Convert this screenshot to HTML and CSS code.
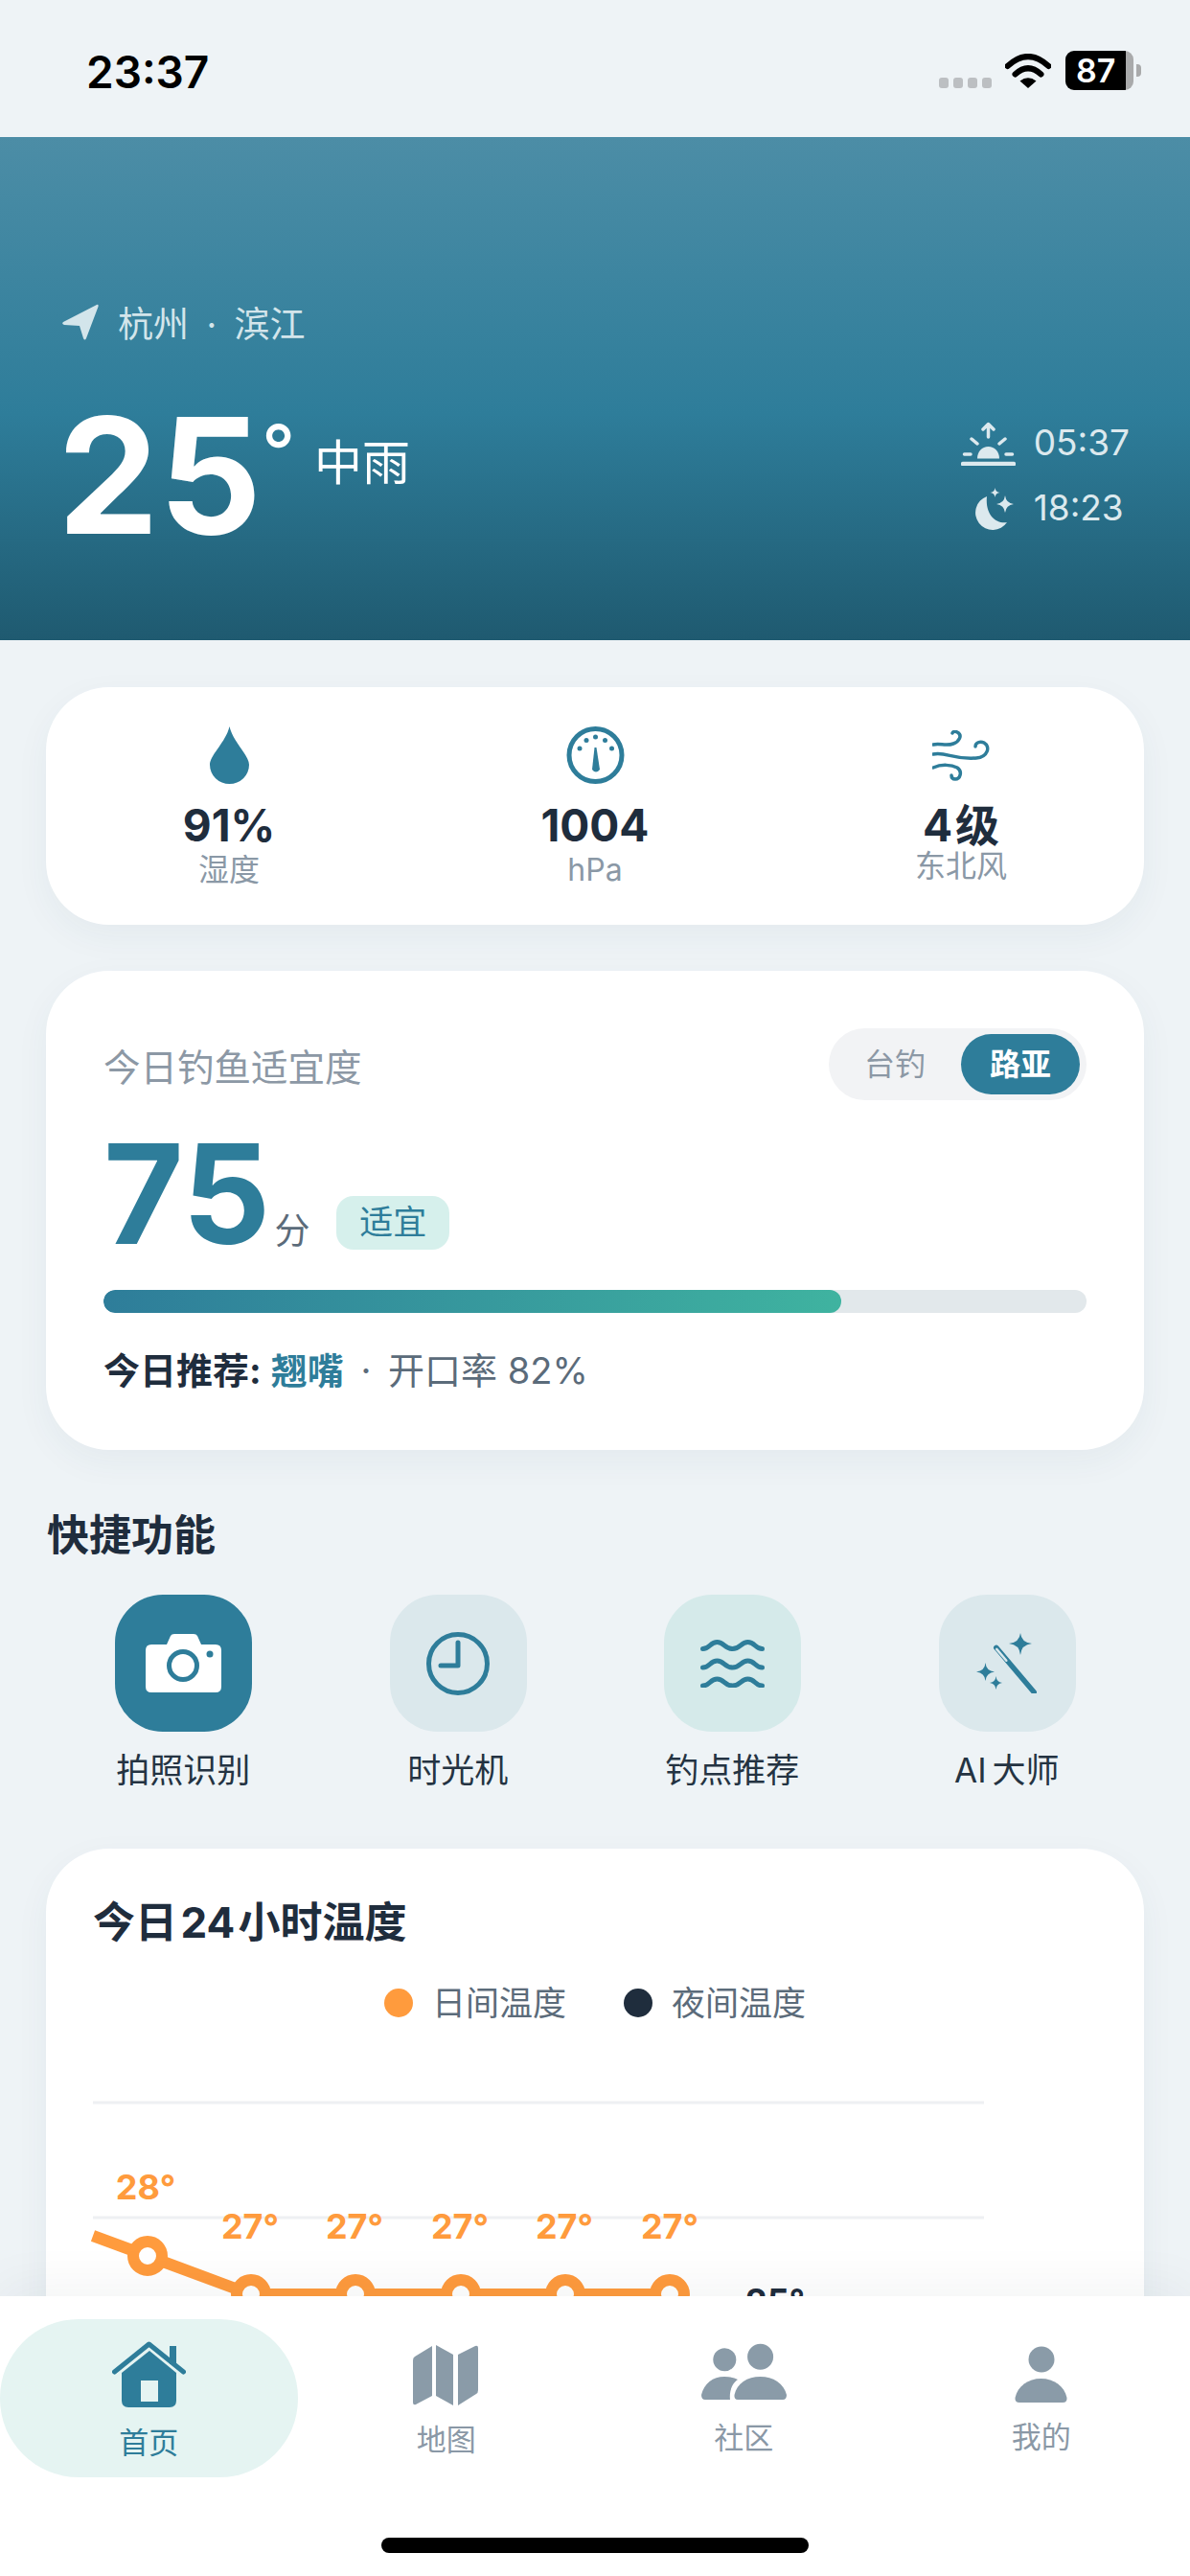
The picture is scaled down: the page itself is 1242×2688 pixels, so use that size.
FILE: index.html
```html
<!DOCTYPE html>
<html lang="zh-CN">
<head>
<meta charset="utf-8">
<title>钓鱼天气</title>
<link rel="stylesheet" href="styles.css">
</head>
<body>
<div class="phone">
  <header class="status">
    <span class="clock">23:37</span>
    <div class="status-right">
      <div class="signal"><i></i><i></i><i></i><i></i></div>
      <svg class="wifi" viewBox="0 0 48 36"><path d="M2.5 13Q24-7 45.500 13" fill="none" stroke="#000" stroke-width="6" stroke-linecap="round"/><path d="M10.500 21.500Q24 9 37.500 21.500" fill="none" stroke="#000" stroke-width="6" stroke-linecap="round"/><path d="M15.500 28.500Q24 22 32.500 28.500L24 36Z" fill="#000"/></svg>
      <div class="battery"><div class="battery-body"><span>87</span></div><div class="battery-nub"></div></div>
    </div>
  </header>

  <section class="hero">
    <div class="location">
      <svg class="loc-icon" viewBox="0 0 38 38"><path d="M36 1Q38 0 37.500 3L25 36Q23.500 39 22 36L18 23 2 22Q-1 21 1 19Z" fill="#d3e5eb"/></svg>
      <span>杭州 · 滨江</span>
    </div>
    <div class="hero-main">
      <div class="now">
        <span class="temp">25</span>
        <span class="deg">°</span>
        <span class="cond">中雨</span>
      </div>
      <div class="sun">
        <div class="sun-row">
          <svg class="sunrise" viewBox="0 0 57 46" fill="none" stroke="#dce9ee" stroke-width="3.500" stroke-linecap="round" stroke-linejoin="round"><path d="M2 44H55" stroke-width="4.500"/><path d="M17 38.500C17 31 22 26 28.500 26S40 31 40 38.500Z" fill="#dce9ee" stroke="none"/><path d="M3.500 34H10M47 34H53.500M11 18L17 23M46 18L40 23M28.500 16V3M23 8L28.500 2.500 34 8"/></svg>
          <span class="sun-time">05:37</span>
        </div>
        <div class="sun-row">
          <svg class="moon" viewBox="0 0 44 46" fill="#dce9ee"><path d="M16 10A18 18 0 1 0 37 37C26 39 14 30 16 10Z"/><path d="M35 9Q36 17 44 18Q36 19 35 27Q34 19 26 18Q34 17 35 9Z"/><path d="M24.500 1Q25 5.500 29.500 6Q25 6.500 24.500 11Q24 6.500 19.500 6Q24 5.500 24.500 1Z"/></svg>
          <span class="sun-time">18:23</span>
        </div>
      </div>
    </div>
  </section>

  <main class="content">
    <section class="card stats">
      <div class="stat">
        <div class="stat-icon"><svg class="i-drop" viewBox="0 0 41 60"><path d="M20.500 0C24 16 41 30 41 40A20.500 20 0 0 1 0 40C0 30 17 16 20.500 0Z" fill="#2e7d9a"/></svg></div>
        <div class="stat-value">91%</div>
        <div class="stat-label">湿度</div>
      </div>
      <div class="stat">
        <div class="stat-icon"><svg class="i-gauge" viewBox="0 0 61 60"><circle cx="30.500" cy="30" r="27.500" fill="none" stroke="#2e7d9a" stroke-width="5"/><path d="M29.500 22H31.500L35 45Q31 50 27 45Z" fill="#2e7d9a"/><g fill="#2e7d9a"><circle cx="14" cy="23" r="2.500"/><circle cx="21" cy="14.500" r="2.500"/><circle cx="30.500" cy="11" r="2.500"/><circle cx="40.500" cy="14.500" r="2.500"/><circle cx="47.500" cy="23" r="2.500"/></g></svg></div>
        <div class="stat-value">1004</div>
        <div class="stat-label">hPa</div>
      </div>
      <div class="stat stat-wind">
        <div class="stat-icon"><svg class="i-wind" viewBox="0 0 60 53" fill="none" stroke="#2e7d9a" stroke-width="3.500" stroke-linecap="round"><path d="M1 15C8 13 14 17 22 14C28 12 32 5 26 2C24 1 22 1 21 3"/><path d="M1 25C14 22 22 31 46 29C58 28 61 17 54 13C50 11 45 13 45 17"/><path d="M1 39C10 35 20 36 26 39C32 43 29 51 24 51C21 51 20 49 20 47"/></svg></div>
        <div class="stat-value">4 级</div>
        <div class="stat-label">东北风</div>
      </div>
    </section>

    <section class="card score">
      <div class="score-head">
        <span class="score-title">今日钓鱼适宜度</span>
        <div class="toggle"><span class="toggle-item">台钓</span><span class="toggle-item active">路亚</span></div>
      </div>
      <div class="score-row">
        <span class="score-num">75</span>
        <span class="score-unit">分</span>
        <span class="score-tag">适宜</span>
      </div>
      <div class="progress"><div class="progress-fill"></div></div>
      <p class="rec"><b>今日推荐:</b><b class="rec-fish">翘嘴</b><span class="rec-rest"> · <span class="rec-rate">开口率 82%</span></span></p>
    </section>

    <h2 class="section-title">快捷功能</h2>
    <section class="quick">
      <div class="quick-item">
        <div class="tile tile-main"><svg class="i-camera" viewBox="0 0 79 61"><path d="M6 11H22L26 2Q27 0 30 0H50Q53 0 54 2L58 11H73Q79 11 79 17V55Q79 61 73 61H6Q0 61 0 55V17Q0 11 6 11Z" fill="#fff"/><circle cx="39" cy="33" r="14.500" fill="#fff" stroke="#2e7d9a" stroke-width="5"/><circle cx="67" cy="21" r="3.500" fill="#2e7d9a"/></svg></div>
        <span>拍照识别</span>
      </div>
      <div class="quick-item">
        <div class="tile tile-gray"><svg class="i-clock" viewBox="0 0 66 66" fill="none" stroke="#2e7d9a" stroke-width="5" stroke-linecap="round" stroke-linejoin="round"><circle cx="33" cy="33" r="30.500"/><path d="M33 11V35H15"/></svg></div>
        <span>时光机</span>
      </div>
      <div class="quick-item">
        <div class="tile tile-mint"><svg class="i-waves" viewBox="0 0 67 50" fill="none" stroke="#2e7d9a" stroke-width="5" stroke-linecap="round"><path d="M2.500 9.500C10 9.500 10 2.500 17.500 2.500C25 2.500 25 9.500 33.500 9.500C42 9.500 42 2.500 49.500 2.500C57 2.500 57 9.500 64.500 9.500"/><path d="M2.500 29C10 29 10 22 17.500 22C25 22 25 29 33.500 29C42 29 42 22 49.500 22C57 22 57 29 64.500 29"/><path d="M2.500 48C10 48 10 41 17.500 41C25 41 25 48 33.500 48C42 48 42 41 49.500 41C57 41 57 48 64.500 48"/></svg></div>
        <span>钓点推荐</span>
      </div>
      <div class="quick-item">
        <div class="tile tile-gray"><svg class="i-wand" viewBox="0 0 64 63"><g fill="#2e7d9a"><path d="M46 0Q47 10 58 11Q47 12 46 23Q45 12 34 11Q45 10 46 0Z"/><path d="M9.500 31Q10.200 39.500 19 40.500Q10.200 41.500 9.500 50Q8.800 41.500 0 40.500Q8.800 39.500 9.500 31Z"/><path d="M20.500 45Q21 51 27 52Q21 53 20.500 59Q20 53 14 52Q20 51 20.500 45Z"/></g><path d="M20 16L61 61" fill="none" stroke="#2e7d9a" stroke-width="5.500" stroke-linecap="round" transform="rotate(2 40 38)"/><path d="M20.500 17.500L31 29" fill="none" stroke="#dbe8ec" stroke-width="2.500" stroke-linecap="round" transform="rotate(2 40 38)"/></svg></div>
        <span class="ai-label">AI 大师</span>
      </div>
    </section>

    <section class="card chart-card">
      <h3 class="chart-title">今日 24 小时温度</h3>
      <div class="legend">
        <div class="legend-item"><i class="dot dot-day"></i><span>日间温度</span></div>
        <div class="legend-item"><i class="dot dot-night"></i><span>夜间温度</span></div>
      </div>
      <svg class="chart" viewBox="0 0 1050 300">
        <g class="chart-grid"><path d="M0 14H930M0 134H930"/></g>
        <path class="chart-line" d="M0 153L57 174L165 214H602"/>
        <g class="chart-points">
          <circle cx="57" cy="174" r="15"/><circle cx="165" cy="214" r="15"/><circle cx="274" cy="214" r="15"/><circle cx="384" cy="214" r="15"/><circle cx="493" cy="214" r="15"/><circle cx="602" cy="214" r="15"/>
        </g>
        <g class="chart-temps">
          <text x="55" y="115">28°</text><text x="164" y="156">27°</text><text x="273" y="156">27°</text><text x="383" y="156">27°</text><text x="492" y="156">27°</text><text x="602" y="156">27°</text>
        </g>
        <text class="chart-night" x="712" y="234">25°</text>
      </svg>
    </section>
  </main>

  <nav class="tabbar">
    <div class="tabs">
      <div class="tab tab-active">
        <svg class="t-home" viewBox="0 0 77 69"><path d="M60 5H67V24H60Z" fill="#2e7d9a"/><path d="M10 33L39 10L67 33V62Q67 69 60 69H17Q10 69 10 62Z" fill="#2e7d9a"/><path d="M2.500 32L38.500 3L74.500 32" fill="none" stroke="#2e7d9a" stroke-width="5" stroke-linecap="round" stroke-linejoin="round"/><path d="M30 41H48V63H30Z" fill="#e5f4f2"/></svg>
        <span>首页</span>
      </div>
      <div class="tab">
        <svg class="t-map" viewBox="0 0 69 63" fill="#8a9ba8"><path d="M20 1V53L3 62Q0 63 0 60V16Q0 13 2 12Z"/><path d="M24 0L42 10V63L24 53Z"/><path d="M47 10L65 1Q68 0 68 3V47Q68 50 66 51L47 63Z"/></svg>
        <span>地图</span>
      </div>
      <div class="tab">
        <svg class="t-people" viewBox="0 0 89 59" fill="#8a9ba8"><circle cx="24.300" cy="17.300" r="12"/><circle cx="61.600" cy="14.300" r="13.500"/><path d="M38 59Q34 59 34.500 54C37 42 48 35 61.500 35C75 35 86 42 89 54Q89 59 85 59Z"/><path d="M4 59Q0 59 0 54C3 42 12 35 24 35Q33 35 38 38C32 42 29 50 30 59Z"/></svg>
        <span>社区</span>
      </div>
      <div class="tab">
        <svg class="t-person" viewBox="0 0 55 59" fill="#8a9ba8"><circle cx="28" cy="14" r="13.500"/><path d="M5 59Q0 59 0.500 54C3 42 14 34 27.500 34C41 34 52 42 54.500 54Q55 59 50 59Z"/></svg>
        <span>我的</span>
      </div>
    </div>
    <div class="home-bar"></div>
  </nav>
</div>
</body>
</html>
```

FILE: styles.css
```css
* { box-sizing: border-box; }
html, body { margin: 0; padding: 0; }
body {
  width: 1242px;
  height: 2688px;
  overflow: hidden;
  background: #eef3f6;
  font-family: Inter, "Noto Sans CJK SC", sans-serif;
  color: #1f2d3d;
}
svg { display: block; }
.phone { position: relative; width: 1242px; height: 2688px; overflow: hidden; }

/* status bar */
.status {
  height: 143px;
  display: flex;
  justify-content: space-between;
  padding: 53px 51px 0 90px;
}
.clock { font-size: 46px; font-weight: 600; line-height: 44px; color: #000; }
.status-right { display: flex; align-items: flex-start; }
.signal { display: flex; gap: 5px; margin: 28px 14px 0 0; }
.signal i { width: 10px; height: 11px; border-radius: 3px; background: #bcbfc2; }
.wifi { width: 48px; height: 36px; margin: 3px 15px 0 0; }
.battery { display: flex; align-items: center; }
.battery-body {
  width: 71px;
  height: 41px;
  border-radius: 9px;
  background: linear-gradient(90deg, #000 0, #000 89%, #a9aaab 89%);
  color: #fff;
  font-size: 34px;
  font-weight: 600;
  line-height: 41px;
  padding-left: 11px;
}
.battery-nub { width: 5px; height: 13px; margin-left: 3px; border-radius: 0 4px 4px 0; background: #a9aaab; }

/* hero */
.hero {
  height: 525px;
  padding: 175px 63px 0 65px;
  color: #fff;
  background: linear-gradient(180deg, #4c8da6 0, #2e7d9a 55%, #1f5a70 100%);
}
.location { display: flex; align-items: center; gap: 20px; height: 36px; font-size: 37px; word-spacing: 8px; color: #d3e5eb; white-space: pre; }
.loc-icon { width: 38px; height: 38px; flex: none; }
.hero-main { display: flex; justify-content: space-between; margin-top: 58px; }
.now { display: flex; align-items: flex-start; margin-left: -5px; }
.temp { font-size: 168px; font-weight: 700; line-height: 168px; }
.deg { font-size: 76px; font-weight: 500; line-height: 76px; margin: 20px 0 0 0; }
.cond { font-size: 50px; line-height: 60px; margin: 41px 0 0 20px; }
.sun { display: flex; flex-direction: column; gap: 22px; margin-top: 28px; }
.sun-row { display: flex; align-items: center; height: 46px; gap: 19px; font-size: 37px; color: #dce9ee; }
.sun-time { margin-top: -4px; }
.sunrise { width: 57px; height: 46px; }
.moon { width: 44px; height: 46px; margin-left: 11px; margin-right: 2px; }

/* content */
.content { padding: 49px 48px 0; }
.card { background: #fff; border-radius: 66px; box-shadow: 0 12px 36px rgba(30, 70, 90, 0.05); }

.stats { height: 248px; padding-top: 41px; display: grid; grid-template-columns: repeat(3, 1fr); }
.stat { display: flex; flex-direction: column; align-items: center; }
.stat-icon { height: 60px; display: flex; align-items: center; }
.i-drop { width: 41px; height: 60px; }
.i-gauge { width: 61px; height: 60px; }
.i-wind { width: 60px; height: 53px; }
.stat-value { font-size: 46px; font-weight: 700; line-height: 50px; margin-top: 18px; word-spacing: -8px; }
.stat-label { font-size: 32px; line-height: 40px; margin-top: 2px; color: #8a98a6; }
.stat-wind .stat-label { margin-top: -2px; }

.score { height: 500px; margin-top: 48px; padding: 60px; }
.score-head { display: flex; justify-content: space-between; align-items: center; }
.score-title { font-size: 38.5px; color: #8c98a5; }
.toggle { display: flex; gap: 7px; padding: 6px 7px; border-radius: 38px; background: #f2f3f5; }
.toggle-item { height: 63px; padding: 0 30px; border-radius: 32px; font-size: 32px; line-height: 63px; color: #8c98a5; }
.toggle-item.active { background: #2e7d9a; color: #fff; font-weight: 700; }
.score-row { display: flex; align-items: baseline; height: 144px; margin-top: 26px; }
.score-num { font-size: 144px; font-weight: 700; line-height: 144px; color: #2e7d9a; }
.score-unit { font-size: 37px; color: #5b6b7a; margin-left: 4px; }
.score-tag {
  align-self: flex-end;
  width: 118px;
  height: 56px;
  margin: 0 0 14px 28px;
  border-radius: 18px;
  background: #d6f0ec;
  color: #2e7d9a;
  font-size: 35px;
  line-height: 54px;
  text-align: center;
}
.progress { height: 24px; margin-top: 28px; border-radius: 12px; background: #e2e8eb; overflow: hidden; }
.progress-fill { width: 75%; height: 100%; border-radius: 12px; background: linear-gradient(90deg, #2e7d9a, #3fb3a0); }
.rec { margin: 37px 0 0; font-size: 38px; line-height: 46px; white-space: pre; word-spacing: 7px; }
.rec b { font-weight: 700; }
.rec-fish { color: #2e7d9a; margin-left: 10px; }
.rec-rest { color: #5b6b7a; }
.rec-rate { word-spacing: 0; }

.section-title { margin: 61px 0 0 1px; font-size: 44px; font-weight: 700; line-height: 56px; }
.quick { display: grid; grid-template-columns: repeat(4, 1fr); margin-top: 34px; }
.quick-item { display: flex; flex-direction: column; align-items: center; gap: 18px; font-size: 35px; line-height: 44px; color: #243342; }
.ai-label { word-spacing: -4px; }
.tile { width: 143px; height: 143px; border-radius: 50px; display: flex; align-items: center; justify-content: center; margin-left: 1px; }
.tile-main { background: #2e7d9a; }
.tile-gray { background: #dbe8ec; }
.tile-mint { background: #d5eaea; }
.i-camera { width: 79px; height: 61px; }
.i-clock { width: 66px; height: 66px; }
.i-waves { width: 67px; height: 50px; }
.i-wand { width: 64px; height: 63px; }

.chart-card { height: 700px; margin-top: 60px; padding: 50px 0 0 49px; }
.chart-title { margin: 0; font-size: 44px; font-weight: 700; line-height: 54px; word-spacing: -7px; }
.legend { display: flex; justify-content: center; gap: 60px; margin: 35px 49px 0 0; }
.legend-item { display: flex; align-items: center; gap: 20px; font-size: 35px; line-height: 44px; color: #5b6b7a; }
.dot { width: 30px; height: 30px; border-radius: 50%; }
.dot-day { background: #ff9b3d; }
.dot-night { background: #1f2d3d; }
.chart { width: 1050px; height: 300px; margin-top: 68px; overflow: visible; }
.chart-grid path { fill: none; stroke: #eef0f3; stroke-width: 3; }
.chart-line { fill: none; stroke: #ff9b3d; stroke-width: 12; stroke-linejoin: round; }
.chart-points circle { fill: #fff; stroke: #ff9b3d; stroke-width: 12; }
.chart-temps text { fill: #ff9b3d; font-size: 36px; font-weight: 700; text-anchor: middle; }
.chart-night { fill: #1f2d3d; font-size: 36px; font-weight: 700; text-anchor: middle; }

/* tab bar */
.tabbar {
  position: absolute;
  left: 0;
  right: 0;
  bottom: 0;
  height: 292px;
  padding-top: 24px;
  background: #fff;
  box-shadow: 0 -10px 50px rgba(20, 40, 60, 0.05);
}
.tabs { display: grid; grid-template-columns: repeat(4, 1fr); }
.tab {
  height: 165px;
  display: flex;
  flex-direction: column;
  align-items: center;
  border-radius: 82px;
  font-size: 31px;
  line-height: 38px;
  color: #8a98a6;
}
.tab-active { background: #e5f4f2; color: #2e7d9a; }
.t-home { width: 77px; height: 69px; margin: 23px 0 18px; }
.t-map { width: 69px; height: 63px; margin: 27px 0 17px; }
.t-people { width: 89px; height: 59px; margin: 25px 0 21px; }
.t-person { width: 55px; height: 59px; margin: 28px 0 17px; }
.home-bar { width: 446px; height: 16px; margin: 63px auto 0; border-radius: 8px; background: #000; }
```
